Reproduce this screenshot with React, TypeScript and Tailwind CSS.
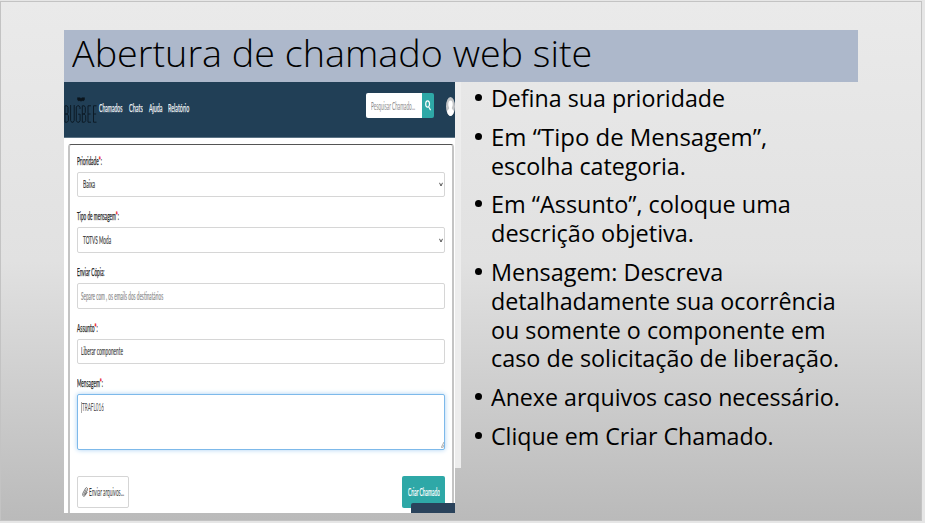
import { useLayoutEffect, useRef, useState } from "react";
import type { ReactNode } from "react";

type FitProps = { width: number; className?: string; children: ReactNode };

/* One line of text condensed or widened to a given width. */
function Fit({ width, className = "", children }: FitProps) {
  const ref = useRef<HTMLSpanElement>(null);
  const [scale, setScale] = useState(1);
  useLayoutEffect(() => {
    if (ref.current) setScale(width / ref.current.offsetWidth);
  }, [width]);
  return (
    <span className={`block shrink-0 ${className}`} style={{ width }}>
      <span
        ref={ref}
        className="inline-block origin-left whitespace-nowrap"
        style={{ transform: `scaleX(${scale})` }}
      >
        {children}
      </span>
    </span>
  );
}

function Label({ text, width, required = true }: { text: string; width: number; required?: boolean }) {
  return (
    <div className="flex h-[30px] items-start pt-[11px] text-[11px] leading-[15px] text-[#222] [-webkit-text-stroke:0.25px]">
      <Fit width={width}>
        {text}
        {required && <span className="text-red-600">*</span>}:
      </Fit>
    </div>
  );
}

function Field({
  text,
  width,
  select = false,
  muted = false,
}: {
  text: string;
  width: number;
  select?: boolean;
  muted?: boolean;
}) {
  return (
    <div
      className={`flex h-[25.7px] items-center justify-between rounded-[2px] border border-[#d6d6d6] bg-white pr-[1px] text-[11px] leading-[14px] [-webkit-text-stroke:0.2px] ${
        select ? "pl-[5px]" : "pl-[3px]"
      } ${muted ? "text-[#8c8c8c]" : "text-[#444]"}`}
    >
      <Fit width={width}>{text}</Fit>
      {select && (
        <svg className="h-[5px] w-[4px]" viewBox="0 0 4 5">
          <path d="M.5 .8 L2 4 L3.5 .8" fill="none" stroke="#555" strokeWidth="1" />
        </svg>
      )}
    </div>
  );
}

function Logo() {
  return (
    <div className="flex h-[27px] w-[33px] shrink-0 flex-col items-center text-[#10202c]">
      <svg className="h-[5px] w-[8px]" viewBox="0 0 8 5">
        <path
          d="M.5.7h2.300l1.200.8 1.200-.8h2.300v2L6.300 4l-1.200-.6L4 4.300l-1.100-.9L1.700 4 .5 2.700z"
          fill="#0b151d"
          stroke="#0b151d"
          strokeWidth=".5"
        />
      </svg>
      <svg className="mt-[3px] h-[18px] w-[33px]" viewBox="0 0 33 18" fill="none" stroke="#0d1b26" strokeWidth="1">
        <path d="M1 .8v16.4h2.2l1.2-1.5v-5L3 9H1h2l1-1.5V2.4L3 .8z" />
        <path d="M6.6 0v15.5l1 1.7h1.6l1-1.7V0" />
        <path d="M16 4V2L15 .8h-1.6L12.3 2v13.7l1.1 1.5h1.7l1-1.5V9.2h-2" />
        <path d="M18.3 .8v16.4h2.2l1.2-1.5v-5L20.3 9h-2 2l1-1.5V2.4l-1-1.6z" />
        <path d="M27 .8h-3v16.4h3M24 9h2.6" />
        <path d="M32.5 .8h-3v16.4h3M29.500 9h2.600" />
      </svg>
    </div>
  );
}

function TopBar() {
  return (
    <header className="flex h-[56px] shrink-0 items-start border-b border-[#5b7385] bg-[#213f56] text-[11px] leading-[14px] text-[#eef2f5]">
      <div className="pt-[15px]">
        <Logo />
      </div>
      <nav className="flex gap-[6px] pt-[19px] pl-[2px] [-webkit-text-stroke:0.25px]">
        <Fit width={23.500}>Chamados</Fit>
        <Fit width={14}>Chats</Fit>
        <Fit width={13.500}>Ajuda</Fit>
        <Fit width={21}>Relatório</Fit>
      </nav>
      <div className="mt-[11px] ml-auto flex h-[25px] w-[68px] overflow-hidden rounded-[2px]">
        <div className="flex w-[56px] items-center bg-white pl-[5px] text-[#8b8b8b]">
          <Fit width={44}>Pesquisar Chamado...</Fit>
        </div>
        <div className="flex w-[12px] items-center justify-center bg-[#2ea8a7]">
          <svg className="h-[11px] w-[6px]" viewBox="0 0 6 11" fill="none" stroke="white" strokeWidth="1.200">
            <ellipse cx="2.600" cy="4" rx="1.900" ry="3.200" />
            <path d="M3.800 7l1.800 3.300" />
          </svg>
        </div>
      </div>
      <svg className="mt-[15px] mr-[0.500px] ml-[11.500px] h-[19px] w-[9px]" viewBox="0 0 9 19">
        <ellipse cx="4.500" cy="9.500" rx="4.500" ry="9.500" fill="#c3c5c7" />
        <path d="M4.500 3.500c1.500 0 2.300 1.700 2.200 4-.1 1.700-.6 2.600-.9 3.500 0 1.500 1.400 1.500 2.200 3.300C7.200 17.500 6 19 4.500 19S1.800 17.500 1 14.300c.8-1.800 2.200-1.800 2.200-3.300-.3-.9-.8-1.800-.9-3.500-.1-2.300.7-4 2.200-4z" fill="white" />
      </svg>
    </header>
  );
}

function TicketForm() {
  return (
    <div className="relative flex h-[431px] w-[391px] shrink-0 flex-col overflow-hidden bg-white font-[Lato,sans-serif]">
      <TopBar />
      <div className="mt-[6px] mr-[1px] ml-[4px] flex grow flex-col rounded-t-[3px] border-x-2 border-t border-t-[#555] border-x-[#c4c4c4] pt-px pr-[7px] pl-[7.400px]">
        <div className="-mt-[4.500px]">
          <Label text="Prioridade" width={25} />
          <Field text="Baixa" width={12} select />
          <Label text="Tipo de mensagem" width={42} />
          <Field text="TOTVS Moda" width={28} select />
          <Label text="Enviar Cópia" width={27.500} required={false} />
          <Field text="Separe com , os emails dos destinatários" width={82} muted />
          <Label text="Assunto" width={20.500} />
          <Field text="Liberar componente" width={42} />
          <Label text="Mensagem" width={26} />
        </div>
        <div className="relative h-[56px] shrink-0 rounded-[2px] border border-[#7db9ea] bg-white pt-[5px] pl-[3px] text-[11px] leading-[14px] text-[#555] shadow-[0_0_5px_#a9d0f2]">
          <div className="flex">
            <span className="mt-[2px] h-[11px] w-px bg-[#aaa]" />
            <Fit width={22}>TRAFL016</Fit>
          </div>
          <svg className="absolute right-0 bottom-[1px] h-[6px] w-[3px]" viewBox="0 0 3 6">
            <path d="M0 6L3 0M1.500 6L3 3" stroke="#888" strokeWidth=".7" />
          </svg>
        </div>
        <div className="mt-[26px] flex h-[32px] shrink-0 justify-between text-[11px] leading-[14px]">
          <button className="flex w-[51.500px] items-center rounded-[2px] border border-[#d5d5d5] bg-white pl-[4px] text-[#333]">
            <svg className="mr-[1px] h-[10px] w-[6px] shrink-0" viewBox="0 0 6 10" fill="none" stroke="#444" strokeWidth=".7">
              <path d="M4.300 2.500L2 7c-.4 1 .5 1.500.9.700L5.300 3.300C6 1.500 4.800-.3 3.600 1.200L.9 6.200c-.8 2 .5 4.200 2 2.500L5.300 5" />
            </svg>
            <Fit width={35}>Enviar arquivos...</Fit>
          </button>
          <button className="flex w-[43px] items-center justify-center rounded-[2px] bg-[#2ea8a7] text-white [-webkit-text-stroke:0.2px]">
            <Fit width={32}>Criar Chamado</Fit>
          </button>
        </div>
      </div>
      <div className="absolute right-0 bottom-0 h-[10px] w-[44px] rounded-tl-[2px] bg-[#29425b]" />
    </div>
  );
}

const topics: [string, number][][] = [
  [["Defina sua prioridade", 234]],
  [["Em “Tipo de Mensagem”,", 276], ["escolha categoria.", 195]],
  [["Em “Assunto”, coloque uma", 300], ["descrição objetiva.", 203]],
  [
    ["Mensagem: Descreva", 232],
    ["detalhadamente sua ocorrência", 344.5],
    ["ou somente o componente em", 335],
    ["caso de solicitação de liberação.", 348],
  ],
  [["Anexe arquivos caso necessário.", 349]],
  [["Clique em Criar Chamado.", 283]],
];

export default function App() {
  return (
    <div className="h-[523px] w-[925px] overflow-hidden bg-[#e6e6e6] pt-px">
      <main className="h-[520px] w-[922px] border border-[#c3c3c3] bg-[linear-gradient(180deg,#eaeaea_0%,#e1e1e1_50%,#bababa_100%)] pt-[28px] pl-[63px] font-['Open_Sans',sans-serif] text-black">
        <h1 className="flex h-[52px] w-[794px] items-start bg-[#adb8cb] pl-[7.500px] text-[37.5px] leading-[45px] font-light">
          <Fit width={520}>Abertura de chamado web site</Fit>
        </h1>
        <div className="flex">
          <TicketForm />
          <div className="h-[386px] w-[6px] shrink-0 bg-[#ededed]" />
          <ul className="flex flex-col gap-[9.800px] pt-[2px] pl-[13.500px] text-[23.5px] leading-[28.88px]">
            {topics.map((lines, i) => (
              <li key={i} className="flex">
                <span className="mt-[10px] mr-[9.500px] h-[7px] w-[7px] shrink-0 rounded-full bg-black" />
                <div>
                  {lines.map(([text, width]) => (
                    <Fit key={text} width={width}>
                      {text}
                    </Fit>
                  ))}
                </div>
              </li>
            ))}
          </ul>
        </div>
      </main>
    </div>
  );
}
